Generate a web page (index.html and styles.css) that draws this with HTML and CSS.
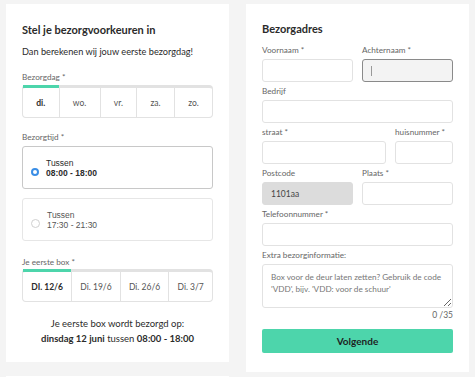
FILE: index.html
```html
<!DOCTYPE html>
<html lang="nl">
<head>
    <meta charset="UTF-8" />
    <meta name="viewport" content="width=device-width, initial-scale=1" />
    <title>Bezorgvoorkeuren</title>
    <link rel="stylesheet" href="styles.css">
</head>
<body>
<div class="page">
    <div class="kolom">
        <div class="kaart voorkeuren">
            <h2 class="titel">Stel je bezorgvoorkeuren in</h2>
            <p class="intro">Dan berekenen wij jouw eerste bezorgdag!</p>

            <div class="label label-dag">Bezorgdag *</div>
            <div class="tabs">
                <div class="tab actief">di.</div>
                <div class="tab">wo.</div>
                <div class="tab">vr.</div>
                <div class="tab">za.</div>
                <div class="tab">zo.</div>
            </div>

            <div class="label label-tijd">Bezorgtijd *</div>
            <div class="optie gekozen">
                <span class="radio"></span>
                <div class="optie-tekst">
                    <span>Tussen</span>
                    <b>08:00 - 18:00</b>
                </div>
            </div>
            <div class="optie">
                <span class="radio"></span>
                <div class="optie-tekst">
                    <span>Tussen</span>
                    <span>17:30 - 21:30</span>
                </div>
            </div>

            <div class="label label-box">Je eerste box *</div>
            <div class="tabs">
                <div class="tab actief">DI. 12/6</div>
                <div class="tab">Di. 19/6</div>
                <div class="tab">Di. 26/6</div>
                <div class="tab">Di. 3/7</div>
            </div>

            <p class="samenvatting">
                Je eerste box wordt bezorgd op:<br>
                <b>dinsdag 12 juni</b> tussen <b>08:00 - 18:00</b>
            </p>
        </div>
        <div class="kaart volgende-kaart"></div>
    </div>

    <div class="kolom">
        <div class="kaart adres">
            <h2 class="titel">Bezorgadres</h2>

            <div class="rij">
                <div class="veld">
                    <label class="label">Voornaam *</label>
                    <input type="text" class="invoer" />
                </div>
                <div class="veld">
                    <label class="label">Achternaam *</label>
                    <div class="invoer focus"><span class="caret"></span></div>
                </div>
            </div>

            <div class="veld">
                <label class="label">Bedrijf</label>
                <input type="text" class="invoer" />
            </div>

            <div class="rij">
                <div class="veld straat">
                    <label class="label">straat *</label>
                    <input type="text" class="invoer" />
                </div>
                <div class="veld huisnummer">
                    <label class="label">huisnummer *</label>
                    <input type="text" class="invoer" />
                </div>
            </div>

            <div class="rij">
                <div class="veld">
                    <label class="label">Postcode</label>
                    <input type="text" class="invoer uit" value="1101aa" disabled />
                </div>
                <div class="veld">
                    <label class="label">Plaats *</label>
                    <input type="text" class="invoer" />
                </div>
            </div>

            <div class="veld">
                <label class="label">Telefoonnummer *</label>
                <input type="text" class="invoer" />
            </div>

            <div class="veld">
                <label class="label">Extra bezorginformatie:</label>
                <textarea class="invoer tekstvak" placeholder="Box voor de deur laten zetten? Gebruik de code 'VDD', bijv. 'VDD: voor de schuur'"></textarea>
            </div>
            <div class="teller">0 /35</div>

            <button class="knop">Volgende</button>
        </div>
    </div>
</div>
</body>
</html>
```

FILE: styles.css
```css
:root {
    --groen: #4dd5ab;
    --tekst: #2b2b2b;
    --grijs: #666;
    --rand: #e2e2e2;
}

body {
    margin: 0;
    background-color: #f4f4f4;
    font-family: Lato, "Open Sans", sans-serif;
    color: var(--tekst);
    font-size: 10px;
}

.page {
    display: flex;
    gap: 17px;
    padding: 4px 6px 0;
}

.kolom {
    width: 223px;
    display: flex;
    flex-direction: column;
    gap: 14px;
}

.kaart {
    background-color: #fff;
    padding: 16px 16px;
}

.volgende-kaart {
    height: 2px;
    padding: 0;
}

.titel {
    margin: 0;
    font-size: 11px;
    font-weight: bold;
    line-height: 20px;
}

.intro {
    margin: 5px 0 0;
    font-size: 9.2px;
    line-height: 14px;
}

.label {
    display: block;
    font-size: 8.2px;
    line-height: 12px;
    color: var(--grijs);
}

.label-dag { margin-top: 12px; margin-bottom: 2px; }
.label-tijd { margin-top: 13px; margin-bottom: 3px; }
.label-box { margin-top: 15px; margin-bottom: 1px; }

.tabs {
    display: flex;
    height: 29px;
    border: 1px solid var(--rand);
    border-top: 3px solid var(--rand);
    border-radius: 4px;
}

.tab {
    flex: 1 1 auto;
    display: flex;
    align-items: center;
    justify-content: center;
    font-size: 8.5px;
    color: #555;
    border-left: 1px solid var(--rand);
}

.tab:first-child {
    border-left: none;
}

.tab.actief {
    font-weight: bold;
    color: var(--tekst);
    box-shadow: 0 -3px 0 var(--groen);
}

.optie {
    display: flex;
    align-items: center;
    height: 41px;
    border: 1px solid #e6e6e6;
    border-radius: 3px;
    padding-left: 8px;
    margin-bottom: 9px;
    font-family: "Liberation Sans", Arial, sans-serif;
    font-size: 8.5px;
    color: #555;
}

.optie.gekozen {
    border-color: #c8c8c8;
    color: var(--tekst);
}

.radio {
    width: 7px;
    height: 7px;
    border: 1px solid #d0d0d0;
    border-radius: 50%;
    margin-right: 7px;
    margin-top: 8px;
}

.gekozen .radio {
    width: 4px;
    height: 4px;
    background-color: #fff;
    border: 2.5px solid #3a8ee6;
}

.optie-tekst {
    display: flex;
    flex-direction: column;
    line-height: 10px;
}

.samenvatting {
    margin: 14px 0 0;
    text-align: center;
    font-size: 9.5px;
    line-height: 15px;
}

/* adres */

.adres {
    padding-bottom: 19px;
}

.adres .titel {
    line-height: 18px;
    margin-bottom: 3px;
}

.rij {
    display: flex;
    gap: 9px;
}

.veld {
    flex: 1;
    margin-top: 3px;
}

.veld .label {
    margin-bottom: 3px;
}

.straat { flex: 0 0 124px; }
.huisnummer { flex: 1; }

.invoer {
    display: block;
    box-sizing: border-box;
    width: 100%;
    height: 23px;
    margin: 0;
    padding: 0 8px;
    border: 1px solid var(--rand);
    border-radius: 3px;
    background-color: #fff;
    font-family: Lato, "Open Sans", sans-serif;
    font-size: 8.5px;
    color: #444;
}

.invoer.focus {
    display: flex;
    align-items: center;
    border-color: #8a8a8a;
    background-color: #f3f3f3;
}

.caret {
    width: 1px;
    height: 10px;
    background-color: #999;
}

.invoer.uit {
    background-color: #dcdcdc;
    border-color: #dcdcdc;
}

.tekstvak {
    height: 44px;
    padding: 6px 8px;
    resize: vertical;
    font-size: 8.2px;
    line-height: 12px;
}

.tekstvak::placeholder {
    color: #777;
}

.teller {
    margin-top: 1px;
    text-align: right;
    font-size: 8.5px;
    line-height: 12px;
    color: var(--grijs);
}

.knop {
    display: block;
    width: 100%;
    height: 24px;
    margin-top: 8px;
    border: none;
    border-radius: 2px;
    background-color: var(--groen);
    font-family: Lato, "Open Sans", sans-serif;
    font-size: 10px;
    font-weight: bold;
    color: #1f1f1f;
}
```
